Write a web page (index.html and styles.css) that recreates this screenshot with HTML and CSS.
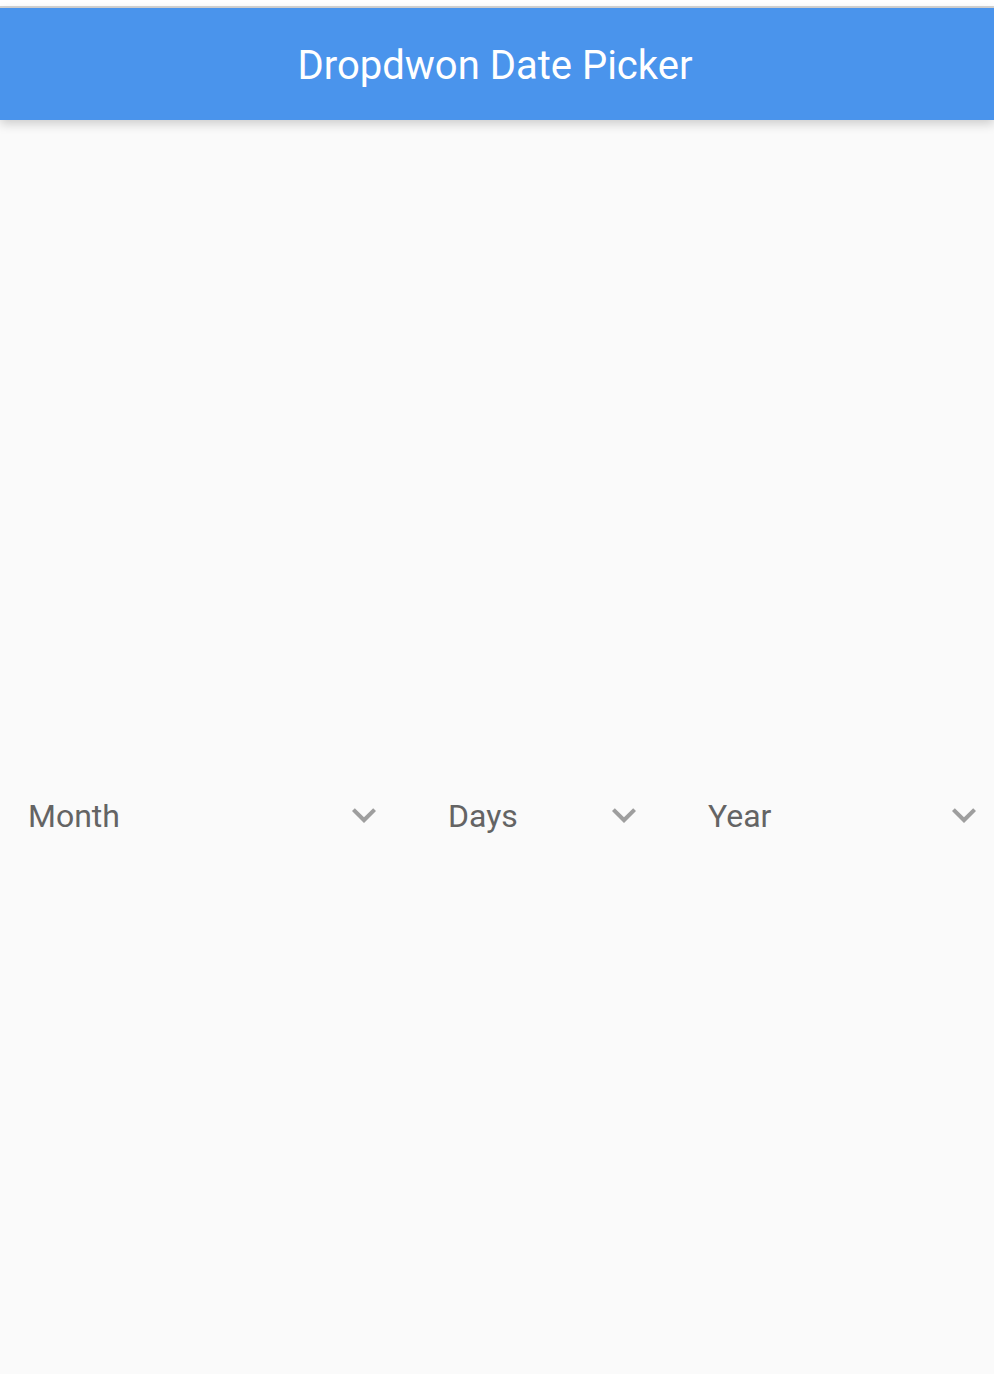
FILE: index.html
```html
<!DOCTYPE html>
<html>
<head>
<meta charset="utf-8">
<link rel="stylesheet" href="styles.css">
</head>
<body>
<div class="statusline"></div>
<header class="appbar"><h1 class="title">Dropdwon Date Picker</h1></header>
<main class="content">
  <div class="row">
    <div class="dropdown dd-month"><span class="label">Month</span><svg class="chev" viewBox="0 0 24 24"><path d="M7.41 8.59L12 13.17l4.59-4.58L18 10l-6 6-6-6 1.41-1.41z"/></svg></div>
    <div class="dropdown dd-days"><span class="label">Days</span><svg class="chev" viewBox="0 0 24 24"><path d="M7.41 8.59L12 13.17l4.59-4.58L18 10l-6 6-6-6 1.41-1.41z"/></svg></div>
    <div class="dropdown dd-year"><span class="label">Year</span><svg class="chev" viewBox="0 0 24 24"><path d="M7.41 8.59L12 13.17l4.59-4.58L18 10l-6 6-6-6 1.41-1.41z"/></svg></div>
  </div>
</main>
</body>
</html>
```
FILE: styles.css
```css
html, body { margin: 0; padding: 0; }
body {
  background: #fafafa;
  font-family: Roboto, "Noto Sans", sans-serif;
  width: 994px;
  height: 1374px;
  overflow: hidden;
}
.statusline {
  height: 6px;
  background: #ffffff;
  border-bottom: 2px solid #d4d4d4;
}
.appbar {
  height: 112px;
  background: #4a94ec;
  display: flex;
  align-items: center;
  justify-content: center;
  box-shadow: 0 4px 10px rgba(0,0,0,0.18);
  position: relative;
  z-index: 1;
}
.title {
  margin: 0;
  color: #ffffff;
  font-weight: 400;
  font-size: 40px;
  letter-spacing: 0;
  padding: 2px 4px 0 0;
}
.content {
  padding-top: 671px;
}
.row {
  display: flex;
  padding-left: 29px;
  gap: 61px;
}
.dropdown {
  display: flex;
  align-items: center;
  height: 48px;
}
.dd-month { width: 359px; }
.dd-days { width: 199px; }
.dd-year { width: 279px; }
.label {
  flex: 1;
  font-size: 32px;
  color: #646464;
  margin-left: -1px;
  padding-top: 2px;
}
.chev {
  width: 48px;
  height: 48px;
  fill: #9e9e9e;
}
```
